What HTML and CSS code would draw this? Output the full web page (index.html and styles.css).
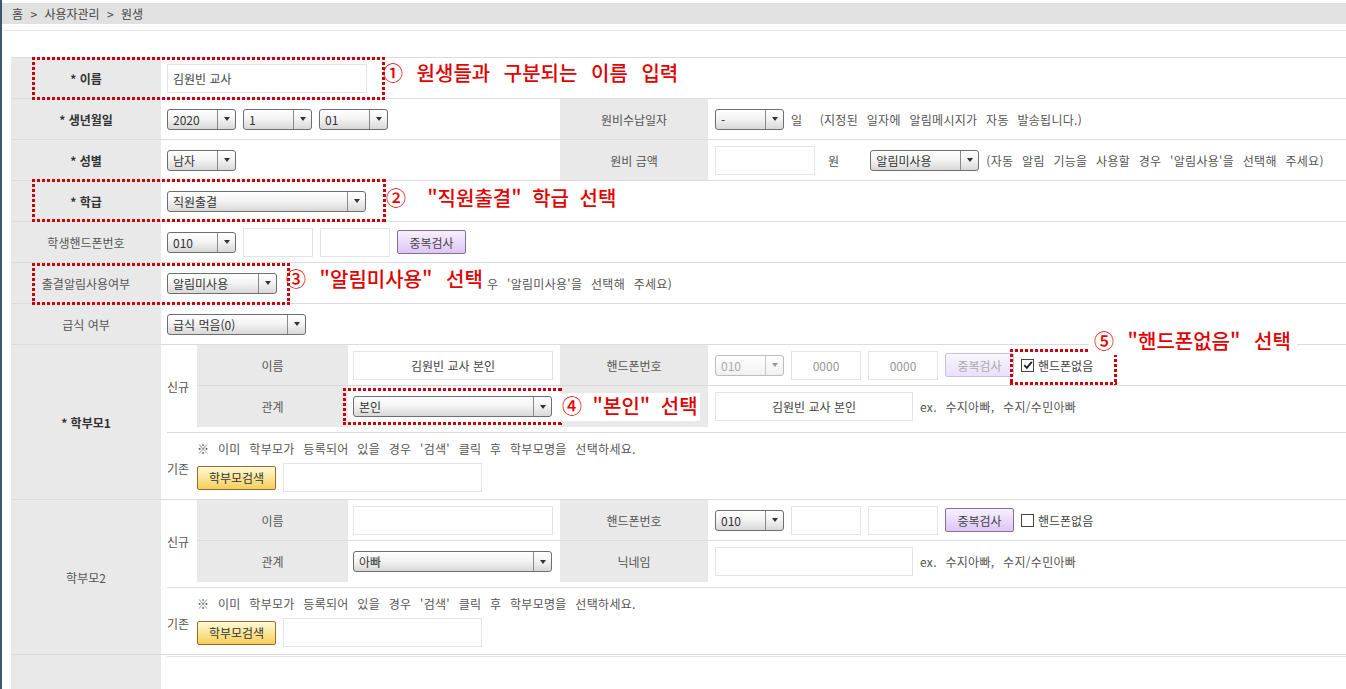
FILE: index.html
```html
<!DOCTYPE html>
<html lang="ko">
<head>
<meta charset="utf-8">
<title>원생</title>
<link rel="stylesheet" href="styles.css">
</head>
<body>
<div class="shell">
  <div class="page">
    <div class="crumb">홈 &gt; 사용자관리 &gt; 원생</div>
    <div class="rule"></div>
    <div class="form">
      <div class="row">
        <div class="lab req">* 이름</div>
        <div class="val span3"><span class="inp w200">김원빈 교사</span></div>
      </div>
      <div class="row">
        <div class="lab req">* 생년월일</div>
        <div class="val">
          <span class="sel w69"><span class="sv">2020</span><span class="sa"></span></span>
          <span class="sel w69"><span class="sv">1</span><span class="sa"></span></span>
          <span class="sel w69"><span class="sv">01</span><span class="sa"></span></span>
        </div>
        <div class="lab">원비수납일자</div>
        <div class="val r">
          <span class="sel w69"><span class="sv">-</span><span class="sa"></span></span>
          <span class="hint">일 &nbsp;(지정된 일자에 알림메시지가 자동 발송됩니다.)</span>
        </div>
      </div>
      <div class="row">
        <div class="lab req">* 성별</div>
        <div class="val">
          <span class="sel w69"><span class="sv">남자</span><span class="sa"></span></span>
        </div>
        <div class="lab">원비 금액</div>
        <div class="val r">
          <span class="inp w100"></span>
          <span class="hint won">원</span>
          <span class="sel w109"><span class="sv">알림미사용</span><span class="sa"></span></span>
          <span class="hint">(자동 알림 기능을 사용할 경우 '알림사용'을 선택해 주세요)</span>
        </div>
      </div>
      <div class="row">
        <div class="lab req">* 학급</div>
        <div class="val span3">
          <span class="sel w199"><span class="sv">직원출결</span><span class="sa"></span></span>
        </div>
      </div>
      <div class="row">
        <div class="lab">학생핸드폰번호</div>
        <div class="val span3">
          <span class="sel w69"><span class="sv">010</span><span class="sa"></span></span>
          <span class="inp w70"></span>
          <span class="inp w70"></span>
          <span class="btn dup">중복검사</span>
        </div>
      </div>
      <div class="row">
        <div class="lab">출결알림사용여부</div>
        <div class="val span3">
          <span class="sel w110"><span class="sv">알림미사용</span><span class="sa"></span></span>
          <span class="hint skip">우 '알림미사용'을 선택해 주세요)</span>
        </div>
      </div>
      <div class="row">
        <div class="lab">급식 여부</div>
        <div class="val span3">
          <span class="sel w139"><span class="sv">급식 먹음(0)</span><span class="sa"></span></span>
        </div>
      </div>

      <div class="row parent">
        <div class="lab req">* 학부모1</div>
        <div class="pcell">
          <div class="new">
            <div class="side">신규</div>
            <div class="sub">
              <div class="srow">
                <div class="slab">이름</div>
                <div class="sval"><span class="inp w200 c">김원빈 교사 본인</span></div>
                <div class="slab">핸드폰번호</div>
                <div class="sval r">
                  <span class="sel w69 off"><span class="sv">010</span><span class="sa"></span></span>
                  <span class="inp w70 c ph">0000</span>
                  <span class="inp w70 c ph">0000</span>
                  <span class="btn dup off">중복검사</span>
                  <span class="chk on"><svg viewBox="0 0 12 12" width="10" height="10"><path d="M1.5 6.2 L4.6 9.4 L10.6 2.2" fill="none" stroke="#222" stroke-width="2.2"/></svg></span>
                  <span class="chkl">핸드폰없음</span>
                </div>
              </div>
              <div class="srow last">
                <div class="slab">관계</div>
                <div class="sval">
                  <span class="sel w199"><span class="sv">본인</span><span class="sa"></span></span>
                </div>
                <div class="slab"></div>
                <div class="sval r">
                  <span class="inp w198 c">김원빈 교사 본인</span>
                  <span class="hint">ex. 수지아빠, 수지/수민아빠</span>
                </div>
              </div>
            </div>
          </div>
          <div class="old">
            <div class="side oside">기존</div>
            <div class="oldbody">
              <div class="hint">※ 이미 학부모가 등록되어 있을 경우 '검색' 클릭 후 학부모명을 선택하세요.</div>
              <div class="ctrl">
                <span class="btn find">학부모검색</span>
                <span class="inp w199"></span>
              </div>
            </div>
          </div>
        </div>
      </div>

      <div class="row parent">
        <div class="lab">학부모2</div>
        <div class="pcell">
          <div class="new">
            <div class="side">신규</div>
            <div class="sub">
              <div class="srow">
                <div class="slab">이름</div>
                <div class="sval"><span class="inp w200"></span></div>
                <div class="slab">핸드폰번호</div>
                <div class="sval r">
                  <span class="sel w69"><span class="sv">010</span><span class="sa"></span></span>
                  <span class="inp w70"></span>
                  <span class="inp w70"></span>
                  <span class="btn dup">중복검사</span>
                  <span class="chk"></span>
                  <span class="chkl">핸드폰없음</span>
                </div>
              </div>
              <div class="srow last">
                <div class="slab">관계</div>
                <div class="sval">
                  <span class="sel w199"><span class="sv">아빠</span><span class="sa"></span></span>
                </div>
                <div class="slab">닉네임</div>
                <div class="sval r">
                  <span class="inp w198"></span>
                  <span class="hint">ex. 수지아빠, 수지/수민아빠</span>
                </div>
              </div>
            </div>
          </div>
          <div class="old">
            <div class="side oside">기존</div>
            <div class="oldbody">
              <div class="hint">※ 이미 학부모가 등록되어 있을 경우 '검색' 클릭 후 학부모명을 선택하세요.</div>
              <div class="ctrl">
                <span class="btn find">학부모검색</span>
                <span class="inp w199"></span>
              </div>
            </div>
          </div>
        </div>
      </div>

      <div class="row tail">
        <div class="lab"></div>
        <div class="tailcell"></div>
      </div>
    </div>
  </div>

  <div class="dotbox b1"></div>
  <div class="dotbox b2"></div>
  <div class="dotbox b3"></div>
  <div class="dotbox b4"></div>
  <div class="dotbox b5"></div>

  <div class="note n1">① 원생들과 구분되는 이름 입력</div>
  <div class="note n2">②&nbsp; "직원출결" 학급 선택</div>
  <div class="note n3">③ "알림미사용" 선택</div>
  <div class="note n4">④ "본인" 선택</div>
  <div class="note n5">⑤ "핸드폰없음" 선택</div>
</div>
</body>
</html>
```

FILE: styles.css
```css
* { box-sizing: border-box; }
html, body { margin: 0; padding: 0; background: #fff; }
body {
  font-family: "Noto Sans CJK KR", "Noto Sans", sans-serif;
  font-size: 12px;
  color: #555;
}
.shell { position: relative; width: 1346px; height: 689px; overflow: hidden; }
.page { border-left: 2px solid #3d5572; height: 689px; padding-top: 3px; }

.crumb {
  height: 21px; line-height: 21px;
  background: #e1e1e1;
  padding-left: 10px;
  color: #444;
  font-size: 12px;
  word-spacing: 4px;
}
.rule { margin-top: 6px; height: 1px; background: #e6e6e6; }

.form { margin: 26px 0 0 9px; border-top: 1px solid #dcdcdc; }

.row {
  display: grid;
  grid-template-columns: 150px 399px 148px 1fr;
  height: 41px;
  border-bottom: 1px solid #dcdcdc;
}
.lab {
  background: #e9e9e9;
  display: flex; align-items: center; justify-content: center;
  color: #555;
  white-space: nowrap;
}
.lab.req { font-weight: bold; color: #333; }
.val { display: flex; align-items: center; gap: 7px; padding-left: 6px; white-space: nowrap; }
.val.r { padding-left: 7px; }
.span3 { grid-column: 2 / 5; }

.hint { color: #555; white-space: nowrap; letter-spacing: 0.3px; word-spacing: 5px; }
.won { margin: 0 24px 0 6px; }
.skip { margin-left: 203px; }

/* select */
.sel {
  display: inline-flex;
  height: 21px;
  border: 1px solid #6e6e6e;
  border-radius: 3px;
  background: linear-gradient(#ffffff, #f4f4f4 45%, #d8d8d8);
  flex: none;
}
.sv { flex: 1; padding-left: 5px; line-height: 19px; color: #333; overflow: hidden; }
.sa {
  width: 18px;
  border-left: 1px solid #8a8a8a;
  display: flex; align-items: center; justify-content: center;
}
.sa::after {
  content: "";
  border-style: solid;
  border-width: 4px 3.5px 0 3.5px;
  border-color: #333 transparent transparent transparent;
}
.sel.off { border-color: #bdbdbd; background: linear-gradient(#ffffff, #f1f1f1); }
.sel.off .sv { color: #aaa; }
.sel.off .sa { border-left-color: #c8c8c8; }
.sel.off .sa::after { border-top-color: #999; }

.w69 { width: 69px; }
.w70 { width: 70px; }
.w100 { width: 100px; }
.w109 { width: 109px; }
.w110 { width: 110px; }
.w139 { width: 139px; }
.w198 { width: 198px; }
.w199 { width: 199px; }
.w200 { width: 200px; }

/* input */
.inp {
  display: inline-flex; align-items: center;
  height: 29px;
  border: 1px solid #dfe5e8;
  background: #fff;
  color: #444;
  padding: 0 5px;
  flex: none;
}
.inp.c { justify-content: center; }
.inp.ph { color: #999; }

/* buttons */
.btn {
  display: inline-flex; align-items: center; justify-content: center;
  height: 24px;
  border-radius: 2px;
  flex: none;
}
.btn.dup {
  width: 69px;
  background: linear-gradient(#f7f0ff, #dcc6f4);
  border: 1px solid #7f6e9e;
  color: #444;
}
.btn.dup.off {
  background: linear-gradient(#faf5ff, #ebdff9);
  border-color: #cbc0da;
  color: #aaa;
}
.btn.find {
  width: 79px;
  background: linear-gradient(#fffbd6, #f5cf5a);
  border: 1px solid #9b6a2c;
  color: #333;
}

/* checkbox */
.chk {
  width: 13px; height: 13px;
  border: 1px solid #444;
  background: #fff;
  display: inline-flex; align-items: center; justify-content: center;
  flex: none;
}
.chkl { margin-left: -3px; color: #444; }

/* parent rows */
.row.parent { height: auto; }
.pcell { grid-column: 2 / 5; padding-left: 6px; }
.new { display: flex; border-bottom: 1px solid #dcdcdc; padding-bottom: 5px; }
.side { width: 30px; flex: none; display: flex; align-items: center; color: #555; }
.sub { flex: 1; }
.srow {
  display: grid;
  grid-template-columns: 151px 212px 148px 1fr;
  height: 41px;
  border-bottom: 1px solid #dcdcdc;
}
.srow.last { height: 41px; border-bottom: none; }
.slab {
  background: #e9e9e9;
  display: flex; align-items: center; justify-content: center;
  color: #555;
}
.sval { display: flex; align-items: center; gap: 7px; padding-left: 5px; white-space: nowrap; }
.sval.r { padding-left: 7px; }

.old { display: flex; height: 66px; }
.oside { padding-top: 5px; }
.oldbody { display: flex; flex-direction: column; justify-content: center; gap: 6px; }
.ctrl { display: flex; align-items: center; gap: 7px; }

.row.tail { height: 40px; border-bottom: none; }
.tailcell { grid-column: 2 / 5; margin: 1px 0 0 6px; border-top: 1px solid #e4e4e4; }

/* annotation overlays */
.dotbox {
  position: absolute;
  background:
    repeating-linear-gradient(90deg, #c8000c 0 3px, transparent 3px 5px) left top / 100% 3px no-repeat,
    repeating-linear-gradient(90deg, #c8000c 0 3px, transparent 3px 5px) left bottom / 100% 3px no-repeat,
    repeating-linear-gradient(180deg, #c8000c 0 3px, transparent 3px 5px) left top / 3px 100% no-repeat,
    repeating-linear-gradient(180deg, #c8000c 0 3px, transparent 3px 5px) right top / 3px 100% no-repeat;
}
.b1 { left: 32px; top: 57px; width: 353px; height: 43px; }
.b2 { left: 32px; top: 179px; width: 354px; height: 43px; }
.b3 { left: 32px; top: 263px; width: 258px; height: 42px; }
.b4 { left: 343px; top: 388px; width: 219px; height: 37px; }
.b5 { left: 1010px; top: 349px; width: 107px; height: 36px; }

.note {
  position: absolute;
  font-family: "Noto Sans CJK KR", sans-serif;
  font-size: 20px;
  font-weight: 500;
  color: #e20000;
  line-height: 22px;
  white-space: nowrap;
  word-spacing: 8px;
}
.n1 { left: 383px; top: 62px; }
.n2 { left: 386px; top: 187px; word-spacing: 5px; }
.n3 { left: 286px; top: 268px; }
.n4 { left: 556px; top: 393px; width: 144px; height: 28px; line-height: 26px; background: #fff; padding-left: 6px; word-spacing: 5px; }
.n5 { left: 1089px; top: 329px; height: 26px; line-height: 24px; background: #fff; padding: 0 6px 0 5px; }
```
